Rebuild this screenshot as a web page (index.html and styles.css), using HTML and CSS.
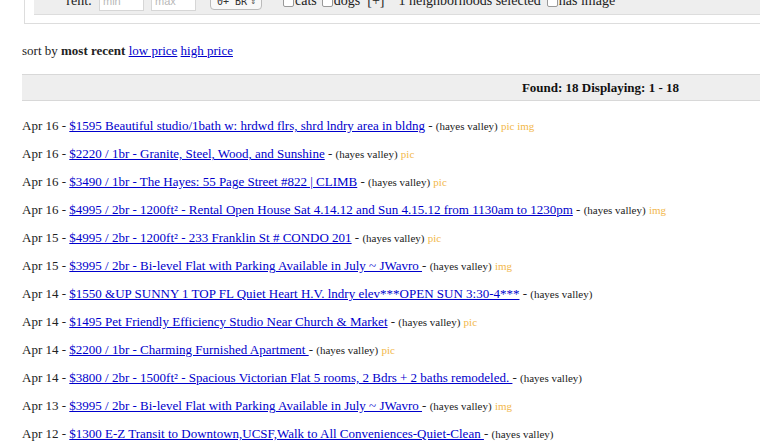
FILE: index.html
```html
<!DOCTYPE html>
<html>
<head>
<meta charset="utf-8">
<title>hayes valley apts/housing for rent - craigslist</title>
<link rel="stylesheet" href="styles.css">
</head>
<body>
<div class="searchbox">
	<div class="searchpanel">
		<div class="filters">
			<span class="lbl">rent:</span>
			<input class="price" type="text" placeholder="min">
			<input class="price" type="text" placeholder="max">
			<span class="brsel">0+ BR <span class="arr">&#8661;</span></span>
			<label class="chk"><span class="box"></span>cats</label>
			<label class="chk"><span class="box"></span>dogs</label>
			<span class="plus">[+]</span>
			<span class="hoods">1 neighborhoods selected</span>
			<label class="chk"><span class="box"></span>has image</label>
		</div>
	</div>
</div>

<div class="sort">sort by <b>most recent</b> <a href="#">low price</a> <a href="#">high price</a></div>

<div class="found"><b>Found: 18 Displaying: 1 - 18</b></div>

<div class="rows">
<p class="row">Apr 16 - <a href="#">$1595 Beautiful studio/1bath w: hrdwd flrs, shrd lndry area in bldng</a> - <span class="hood">(hayes valley)</span> <span class="p">pic&nbsp;img</span></p>
<p class="row">Apr 16 - <a href="#">$2220 / 1br - Granite, Steel, Wood, and Sunshine</a> - <span class="hood">(hayes valley)</span> <span class="p">pic</span></p>
<p class="row">Apr 16 - <a href="#">$3490 / 1br - The Hayes: 55 Page Street #822 | CLIMB</a> - <span class="hood">(hayes valley)</span> <span class="p">pic</span></p>
<p class="row">Apr 16 - <a href="#">$4995 / 2br - 1200ft&sup2; - Rental Open House Sat 4.14.12 and Sun 4.15.12 from 1130am to 1230pm</a> - <span class="hood">(hayes valley)</span> <span class="p">img</span></p>
<p class="row">Apr 15 - <a href="#">$4995 / 2br - 1200ft&sup2; - 233 Franklin St # CONDO 201</a> - <span class="hood">(hayes valley)</span> <span class="p">pic</span></p>
<p class="row">Apr 15 - <a href="#">$3995 / 2br - Bi-level Flat with Parking Available in July ~ JWavro </a> - <span class="hood">(hayes valley)</span> <span class="p">img</span></p>
<p class="row">Apr 14 - <a href="#">$1550 &amp;UP SUNNY 1 TOP FL Quiet Heart H.V. lndry elev***OPEN SUN 3:30-4***</a> - <span class="hood">(hayes valley)</span></p>
<p class="row">Apr 14 - <a href="#">$1495 Pet Friendly Efficiency Studio Near Church &amp; Market</a> - <span class="hood">(hayes valley)</span> <span class="p">pic</span></p>
<p class="row">Apr 14 - <a href="#">$2200 / 1br - Charming Furnished Apartment </a> - <span class="hood">(hayes valley)</span> <span class="p">pic</span></p>
<p class="row">Apr 14 - <a href="#">$3800 / 2br - 1500ft&sup2; - Spacious Victorian Flat 5 rooms, 2 Bdrs + 2 baths remodeled. </a> - <span class="hood">(hayes valley)</span></p>
<p class="row">Apr 13 - <a href="#">$3995 / 2br - Bi-level Flat with Parking Available in July ~ JWavro </a> - <span class="hood">(hayes valley)</span> <span class="p">img</span></p>
<p class="row">Apr 12 - <a href="#">$1300 E-Z Transit to Downtown,UCSF,Walk to All Conveniences-Quiet-Clean </a> - <span class="hood">(hayes valley)</span></p>
</div>
</body>
</html>
```

FILE: styles.css
```css
body{margin:0;background:#fff;color:#222;font:13px "Liberation Serif","Times New Roman",Times,serif;overflow:hidden;}
a{color:#0000cc;}
.searchbox{margin:-40px 0 0 24px;border:1px solid #ddd;border-top:none;border-right:none;padding:0 0 8px 9px;}
.searchpanel{background:#eee;border-bottom:1px solid #ddd;padding:30px 0 2px;}
.filters{display:flex;align-items:center;height:22px;}
.lbl{width:58px;text-align:right;font-size:14px;margin-right:7px;}
.price{box-sizing:border-box;width:45px;height:20px;margin:0 7px 0 0;padding:0 3px;border:1px solid #d6d6d6;background:#fff;font:11px "Liberation Sans",Arial,sans-serif;}
.price::placeholder{color:#b8b8b8;}
.brsel{box-sizing:border-box;width:52px;height:18px;margin-left:7px;border:1px solid #bbb;border-radius:4px;background:#f8f8f8;font:10px "DejaVu Sans Mono",monospace;display:flex;align-items:center;padding-left:6px;color:#333;}
.arr{margin-left:auto;margin-right:5px;font-size:9px;}
.chk{display:flex;align-items:center;font-size:14px;}
.chk .box{width:9px;height:9px;border:1px solid #999;border-radius:2px;background:#fff;margin-right:1px;}
.filters .chk:first-of-type{margin-left:21px;}
.chk + .chk{margin-left:5px;}
.plus{margin-left:7px;font-size:14px;}
.hoods{margin-left:14px;font-size:14px;}
.hoods + .chk{margin-left:6px;}
.sort{margin:19px 0 0 22px;line-height:16px;}
.found{margin:15px 0 0 22px;height:25px;line-height:25px;background:#eee;border-top:1px solid #d8d8d8;border-bottom:1px solid #d8d8d8;text-align:right;padding-right:81px;color:#111;}
.rows{margin:11px 0 0 22px;}
.row{margin:0;height:28px;line-height:28px;white-space:nowrap;}
.hood{font-size:11px;}
.p{font-size:11px;color:#f2b84a;}
```
